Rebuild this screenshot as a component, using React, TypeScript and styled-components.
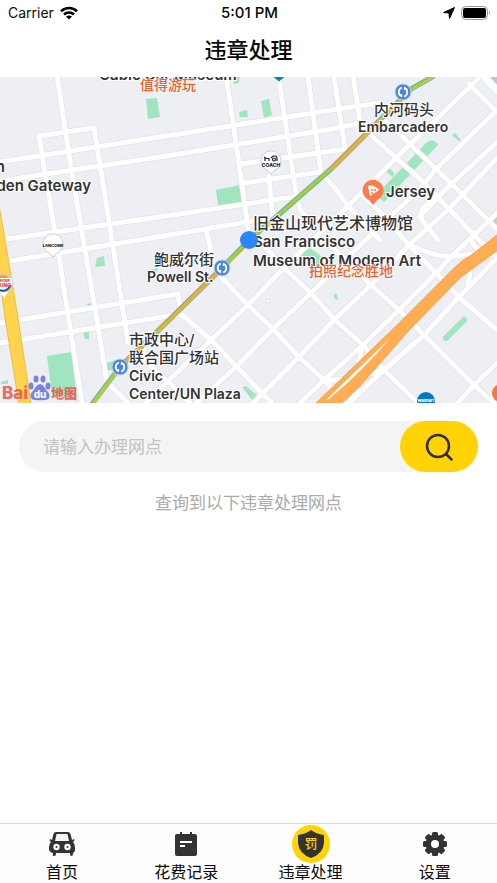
import React from 'react';
import styled, { createGlobalStyle } from 'styled-components';

const GlobalStyle = createGlobalStyle`
  *, *::before, *::after { box-sizing: border-box; }
  body {
    margin: 0;
    background: #fff;
    color: #0a0a0a;
    font-family: Inter, "Noto Sans CJK SC", sans-serif;
  }
`;

const Screen = styled.div`
  display: flex;
  flex-direction: column;
  min-height: 100vh;
`;

const StatusBar = styled.div`
  display: grid;
  grid-template-columns: 1fr auto 1fr;
  align-items: center;
  height: 26px;
  padding: 0 6px 0 8px;
  font-size: 14px;
  line-height: 20px;
`;

const StatusGroup = styled.div<{ $end?: boolean }>`
  display: flex;
  align-items: center;
  gap: 6px;
  justify-content: ${({ $end }) => ($end ? 'flex-end' : 'flex-start')};
`;

const Clock = styled.time`
  font-size: 15px;
  font-weight: 500;
`;

const Header = styled.header`
  display: flex;
  align-items: center;
  justify-content: center;
  height: 51px;
  padding-bottom: 4px;
`;

const Title = styled.h1`
  margin: 0;
  font-size: 22px;
  line-height: 32px;
  font-weight: 500;
`;

const MapSvg = styled.svg`
  display: block;
  width: 100%;
  height: 326px;
  background: #eeeff5;
`;

type LabelTone = 'place' | 'chinese' | 'spot';

const MapText = styled.text<{ $tone?: LabelTone; $size?: number }>`
  font-size: ${({ $size }) => $size ?? 14}px;
  font-weight: ${({ $tone }) => ($tone ? 500 : 600)};
  fill: ${({ $tone }) => ($tone === 'spot' ? '#e8622c' : '#333')};
  stroke: #fff;
  stroke-width: ${({ $tone }) => ($tone === 'spot' ? 1 : 2)}px;
  stroke-linejoin: round;
  paint-order: stroke;
`;

const MarkText = styled.text<{ $size: number; $fill: string }>`
  font-size: ${({ $size }) => $size}px;
  font-weight: 800;
  fill: ${({ $fill }) => $fill};
`;

const Main = styled.main`
  flex: 1;
  padding: 18px 19px;
`;

const SearchForm = styled.form`
  display: flex;
  height: 51px;
  border-radius: 26px;
  background: #f4f4f4;
`;

const SearchInput = styled.input`
  flex: 1;
  min-width: 0;
  padding: 0 24px;
  border: 0;
  outline: 0;
  background: transparent;
  font-family: inherit;
  font-size: 17px;
  color: #333;
  &::placeholder { color: #c2c2c2; opacity: 1; }
`;

const SearchButton = styled.button`
  display: flex;
  align-items: center;
  justify-content: center;
  width: 78px;
  padding: 0;
  border: 0;
  border-radius: 26px;
  background: #ffd306;
  cursor: pointer;
`;

const Hint = styled.p`
  margin: 18px 0 0;
  text-align: center;
  font-size: 17px;
  line-height: 26px;
  color: #aaa;
`;

const TabBar = styled.nav`
  display: grid;
  grid-template-columns: repeat(4, 1fr);
  height: 60px;
  border-top: 1px solid #dcdcdc;
  background: #fdfdfd;
`;

const Tab = styled.a`
  display: flex;
  flex-direction: column;
  align-items: center;
  color: #0a0a0a;
  text-decoration: none;
  font-size: 16px;
  line-height: 18px;
`;

const TabIcon = styled.span<{ $active?: boolean }>`
  display: flex;
  align-items: center;
  justify-content: center;
  width: 38px;
  height: 38px;
  margin-top: 1px;
  border-radius: 50%;
  background: ${({ $active }) => ($active ? '#ffd306' : 'transparent')};
`;

const streets = [
  'M57 76L70 161L83 239L97 320L106 377Q108 384 114 389L128 403',
  'M39 136L55 233L59 257L82 403',
  'M94 128L112 240L128 343',
  'M39 136L94 128',
  'M0 162L166 136L332 110L379 103',
  'M0 181L166 156L332 129L361 123',
  'M241 164L332 151L345 149',
  'M244 183L321 172',
  'M0 240L166 216L299 196',
  'M10 261L133 241L253 221',
  'M226 76L236 143L249 235',
  'M279 79L296 193L300 210L311 221',
  'M308 76L321 173L334 187L348 206L380 240',
  'M269 176L273 220',
  'M206 229L213 260Q214 268 221 277L248 305L273 329L299 357L324 380L345 403',
  'M334 76L345 149',
  'M353 76L361 126',
  'M0 323L178 294L181 314',
  'M0 343L181 314L211 340L262 393L272 403',
  'M142 344L146 362L173 386L190 403',
  'M259 240L284 268L311 293L335 320L363 345L385 371L418 403',
  'M146 403L166 383L211 340L248 305L284 268L320 233L348 206L396 158L478 79',
  'M196 403L236 367L273 329L311 293L381 225L419 190L436 169L497 110',
  'M253 403L299 357L334 320L371 285L409 245L449 209L497 158',
  'M300 403L324 380L363 345L399 310L436 273L453 255L497 213',
  'M349 403L384 370L424 335L459 297L497 258',
  'M458 403L474 385L497 363',
  'M331 246L371 285L399 310L424 335L474 385L494 403',
  'M381 213L409 245L436 273L459 297L497 330',
  'M361 194L381 213',
  'M383 118L409 143L436 169L463 195L497 229',
  'M361 126L396 158L420 179L449 209L478 239L497 257',
  'M469 84L497 112',
  'M419 217L449 186L497 142',
  'M440 195L424 207Q420 211 422 220L438 240',
  'M409 245L430 253Q446 259 470 254',
  'M472 241Q474 250 486 252',
  'M470 271L468 286',
  'M363 345L355 376M384 370L363 376L349 403',
  'M324 381L355 378',
];

const parks = [
  'M146 99L157 98L160 117L148 119Z',
  'M216 190L240 185L243 202L218 205Z',
  'M239 112L247 110L248 117L240 117Z',
  'M261 101L269 99L272 115L264 118Z',
  'M234 76L240 76L239 83L234 84Z',
  'M97 258L104 256L105 266L95 267Z',
  'M87 304L92 303L92 306L88 306Z',
  'M83 333L89 332L89 339L85 339Z',
  'M47 356L71 352L77 400L52 395Z',
  'M107 363L116 360L114 370L107 370Z',
  'M146 271L158 268L156 274L148 274Z',
  'M1 382L8 380L8 384L1 384Z',
  'M300 254L310 248L324 258L317 269Z',
  'M242 387L246 386L258 396L252 400Z',
  'M384 202L376 195L426 143Q433 137 438 145Z',
  'M386 172L390 168L394 173L393 177Z',
  'M452 135L455 133L461 140L459 141Z',
  'M491 220L497 215L497 225L492 223Z',
  'M334 294L337 294L338 300L334 298Z',
];

const transitPath =
  'M434 76L411 89L381 119L363 137L331 169L276 217L249 240L222 268L166 323L120 367L92 404';

function Station({ x, y }: { x: number; y: number }) {
  return (
    <g transform={`translate(${x} ${y})`}>
      <circle r="8" fill="#4a86dc" stroke="#b9d0f0" />
      <path
        d="M-1 -4.5A4.7 4.7 0 0 0 -2 4M1 4.5A4.7 4.7 0 0 0 2 -4"
        fill="none"
        stroke="#fff"
        strokeWidth="1.8"
      />
      <path d="M-4.8 2.5L-.8 2L-1 5.6ZM4.8 -2.5L.8 -2L1 -5.6Z" fill="#fff" />
    </g>
  );
}

function WhitePin({ x, y }: { x: number; y: number }) {
  return (
    <path
      transform={`translate(${x} ${y})`}
      d="M0 13L-4 9A10 10 0 1 1 4 9Z"
      fill="#fff"
      stroke="#cbccd2"
    />
  );
}

function CityMap() {
  return (
    <MapSvg viewBox="0 77 497 326" preserveAspectRatio="xMidYMid slice" role="img" aria-label="地图">
      <path d="M481 76H497V91Q487 86 481 76Z" fill="#a6cdf8" />
      {parks.map((d) => <path key={d} d={d} fill="#a0e5bd" />)}
      <path d="M446 338L464 320" stroke="#a0e5bd" strokeWidth="6" strokeLinecap="round" />
      <g fill="none" strokeLinecap="round" strokeLinejoin="round">
        <g stroke="#dedcd6" strokeWidth="6">
          {streets.map((d) => <path key={d} d={d} />)}
        </g>
        <g stroke="#fff" strokeWidth="5">
          {streets.map((d) => <path key={d} d={d} />)}
        </g>
        <path d="M484 76L497 90" stroke="#fff" strokeWidth="7" />
      </g>
      <circle cx="268" cy="301" r="2" fill="#fff" stroke="#dedcd6" />
      <path d="M-2 200L5 240L17 312L31 404H19L5 318L-2 265Z" fill="#ffd34c" stroke="#edbd45" />
      <path
        d="M315 404L394 328L454 268Q462 260 473 254L498 234V250L461 277L411 328L359 387L341 404Z"
        fill="#ffac52"
        stroke="#f7a44b"
      />
      <path d="M326 400Q356 371 391 337Q364 370 329 399Z" fill="#fff" />
      <g fill="none" strokeLinejoin="round">
        <path d={transitPath} stroke="#50b7ad" strokeWidth="5" />
        <path d="M381 119L363 137L331 169M222 268L166 323L120 367" stroke="#ee7d78" strokeWidth="5" />
        <path d={transitPath} stroke="#b5c936" strokeWidth="3" />
        <path d="M435 77L412 90L382 120L332 170M277 218L223 269L167 324L121 368L94 404" stroke="#d4c65b" strokeWidth="1" />
      </g>

      <path d="M273 76H285L279 81Z" fill="#0b80c5" stroke="#0b80c5" />
      <WhitePin x={271} y={161} />
      <g fill="none" stroke="#222" strokeWidth="1.2">
        <path d="M264 157L266 158.500H269M265 161V158M269 161V158" />
        <circle cx="274" cy="159.500" r="1.500" />
        <path d="M271 158L273 156H276L277 158V161" />
      </g>
      <MarkText x="271" y="167" textAnchor="middle" $size={5} $fill="#222">COACH</MarkText>
      <WhitePin x={53} y={244} />
      <MarkText x="53" y="247" textAnchor="middle" $size={4} $fill="#222">LANCOME</MarkText>

      <circle cx="4" cy="283" r="9" fill="#fff" stroke="#ccc" />
      <path d="M4 298L0 292H8Z" fill="#fff" />
      <path d="M-3 278A8 8 0 0 1 10 278Z" fill="#f3a22c" />
      <path d="M-3 289Q6 294 11 285" fill="none" stroke="#1859b0" strokeWidth="2" />
      <MarkText x="10" y="282" textAnchor="end" $size={4} $fill="#e43327">BURGER</MarkText>
      <MarkText x="11" y="287" textAnchor="end" $size={5} $fill="#e43327">KING</MarkText>

      <path d="M373 205L369 200A10.500 10.500 0 1 1 377 200Z" fill="#fb7b4a" />
      <path d="M368 186Q374 184 379 190L370 196Z" fill="#fff" />
      <g fill="#fb7b4a">
        <circle cx="372" cy="190" r="1" />
        <circle cx="375" cy="190" r="1" />
        <circle cx="372" cy="193" r="1" />
      </g>
      <circle cx="426" cy="401" r="9" fill="#0879c1" />
      <MarkText x="426" y="402" textAnchor="middle" $size={4} $fill="#fff">Walmart</MarkText>
      <circle cx="501" cy="393" r="9" fill="#fb7448" />

      <Station x={403} y={92} />
      <Station x={222} y={268} />
      <Station x={120} y={367} />

      <MapText x="99" y="80" $size={15}>Cable Car Museum</MapText>
      <MapText x="140" y="90" $tone="spot">值得游玩</MapText>
      <MapText x="374" y="115" $tone="chinese" $size={15}>内河码头</MapText>
      <MapText x="358" y="132">Embarcadero</MapText>
      <MapText x="5" y="172" textAnchor="end" $size={15}>Golden</MapText>
      <MapText x="91" y="191" textAnchor="end" $size={15}>Golden Gateway</MapText>
      <MapText x="386" y="197" $size={15}>Jersey</MapText>
      <MapText x="253" y="229" $tone="chinese" $size={16}>旧金山现代艺术博物馆</MapText>
      <MapText x="253" y="247" $size={15}>San Francisco</MapText>
      <MapText x="253" y="266" $size={15}>Museum of Modern Art</MapText>
      <MapText x="309" y="276" $tone="spot">拍照纪念胜地</MapText>
      <MapText x="154" y="265" $tone="chinese" $size={15}>鲍威尔街</MapText>
      <MapText x="147" y="282">Powell St.</MapText>
      <MapText x="129" y="345" $tone="chinese" $size={15}>市政中心/</MapText>
      <MapText x="129" y="363" $tone="chinese" $size={15}>联合国广场站</MapText>
      <MapText x="129" y="381">Civic</MapText>
      <MapText x="129" y="399">Center/UN Plaza</MapText>
      <circle cx="249" cy="240" r="9" fill="#2a86fb" />

      <g opacity="0.85">
        <MarkText x="2" y="399" $size={17} $fill="#e9564d">Bai</MarkText>
        <g fill="#686fdd">
          <ellipse cx="31" cy="386" rx="2.500" ry="3.500" />
          <ellipse cx="36" cy="379" rx="2.500" ry="3.500" />
          <ellipse cx="43" cy="379" rx="2.500" ry="3.500" />
          <ellipse cx="48" cy="386" rx="2.500" ry="3.500" />
          <path d="M40 384Q44 385 46 390Q51 394 49 398Q47 401 40 400Q33 401 31 398Q29 394 34 390Q36 385 40 384Z" />
        </g>
        <MarkText x="40" y="398" textAnchor="middle" $size={10} $fill="#fff">du</MarkText>
        <MarkText x="51" y="398" $size={13} $fill="#e9564d">地图</MarkText>
      </g>
    </MapSvg>
  );
}

function WifiIcon() {
  return (
    <svg width="18" height="14" viewBox="0 0 18 14" aria-hidden="true">
      <g fill="none" stroke="#000" strokeWidth="2.600">
        <path d="M1 5.200A11.500 11.500 0 0 1 17 5.200" />
        <path d="M4 8.500A7.300 7.300 0 0 1 14 8.500" />
      </g>
      <path d="M9 13.500L6 10.500Q9 8.300 12 10.500Z" />
    </svg>
  );
}

function LocationIcon() {
  return (
    <svg width="12" height="12" viewBox="0 0 12 12" aria-hidden="true">
      <path d="M.6 5.500L11.500.5L6.500 11.500L6 6Z" stroke="#000" strokeLinejoin="round" />
    </svg>
  );
}

function BatteryIcon() {
  return (
    <svg width="30" height="14" viewBox="0 0 30 14" aria-hidden="true">
      <rect x=".5" y=".5" width="26" height="13" rx="4" fill="none" stroke="#999" />
      <rect x="2" y="2" width="23" height="10" rx="2" />
      <path d="M28 5Q30 7 28 9Z" fill="#999" />
    </svg>
  );
}

function CarIcon() {
  return (
    <svg width="26" height="26" viewBox="0 0 26 26" aria-hidden="true">
      <path
        fill="#333"
        d="M7 1H19Q21 1 21.500 3L23 9L25 8Q26 9 25 10L24 11Q26 13 26 16V19Q26 21 24 22V23Q24 25 22.500 25T21 23V22H7V23Q7 25 5 25T4 23V22Q0 21 0 18V16Q0 13 2 11L1 10Q0 9 1 8L3 9L4.500 3Q5 1 7 1Z"
      />
      <path d="M7.500 3H18.500L20 10H6Z" fill="#f1f2fa" />
      <circle cx="7.500" cy="16" r="3.200" fill="#fff" />
      <circle cx="18.500" cy="16" r="3.200" fill="#fff" />
      <circle cx="7.500" cy="16" r="1" fill="#333" />
      <circle cx="18.500" cy="16" r="1" fill="#333" />
    </svg>
  );
}

function RecordIcon() {
  return (
    <svg width="24" height="26" viewBox="0 0 24 26" aria-hidden="true">
      <path d="M7 1V4M17 1V4" stroke="#333" strokeWidth="2" />
      <rect x="1" y="3" width="22" height="22" rx="2" fill="#333" />
      <path d="M6 11H18M6 15H11" stroke="#fff" strokeWidth="2" />
    </svg>
  );
}

const ShieldMark = styled.text`
  font-size: 13px;
  font-weight: 500;
  fill: #ffd306;
`;

function ShieldIcon() {
  return (
    <svg width="28" height="30" viewBox="0 0 28 30" aria-hidden="true">
      <path d="M14 1Q19 5 27 6V14Q26 25 14 29Q2 25 1 14V6Q9 5 14 1Z" fill="#333" />
      <ShieldMark x="14" y="19" textAnchor="middle">罚</ShieldMark>
    </svg>
  );
}

function GearIcon() {
  const angles = [0, 45, 90, 135];
  return (
    <svg width="26" height="26" viewBox="0 0 26 26" aria-hidden="true">
      <g fill="#333">
        {angles.map((a) => (
          <rect key={a} x="10" y="1" width="6" height="24" rx="1.500" transform={`rotate(${a} 13 13)`} />
        ))}
        <circle cx="13" cy="13" r="9.500" />
      </g>
      <circle cx="13" cy="13" r="4" fill="#fff" />
    </svg>
  );
}

const tabs = [
  { label: '首页', icon: <CarIcon /> },
  { label: '花费记录', icon: <RecordIcon /> },
  { label: '违章处理', icon: <ShieldIcon />, active: true },
  { label: '设置', icon: <GearIcon /> },
];

export default function App() {
  return (
    <Screen>
      <GlobalStyle />
      <StatusBar>
        <StatusGroup>
          <span>Carrier</span>
          <WifiIcon />
        </StatusGroup>
        <Clock>5:01 PM</Clock>
        <StatusGroup $end>
          <LocationIcon />
          <BatteryIcon />
        </StatusGroup>
      </StatusBar>
      <Header>
        <Title>违章处理</Title>
      </Header>
      <CityMap />
      <Main>
        <SearchForm role="search" onSubmit={(e) => e.preventDefault()}>
          <SearchInput type="text" aria-label="办理网点" placeholder="请输入办理网点" />
          <SearchButton type="submit" aria-label="搜索">
            <svg width="28" height="28" viewBox="0 0 28 28" fill="none" stroke="#2f2f2f" strokeWidth="2.500" strokeLinecap="round" aria-hidden="true">
              <circle cx="13" cy="13" r="11" />
              <path d="M21.500 21.500L26.500 26.500" />
            </svg>
          </SearchButton>
        </SearchForm>
        <Hint>查询到以下违章处理网点</Hint>
      </Main>
      <TabBar aria-label="主导航">
        {tabs.map(({ label, icon, active }) => (
          <Tab key={label} href="#" aria-current={active ? 'page' : undefined}>
            <TabIcon $active={active}>{icon}</TabIcon>
            {label}
          </Tab>
        ))}
      </TabBar>
    </Screen>
  );
}
